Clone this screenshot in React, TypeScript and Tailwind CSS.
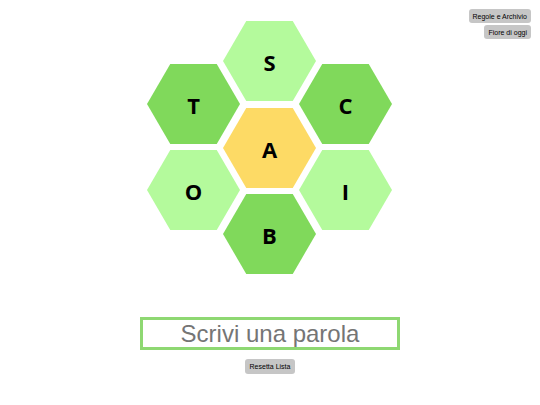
import React, { useState } from 'react';

type Cell = { letter: string; left: number; top: number; color: string };

const LIGHT = 'bg-[#b4fa9c]';
const DARK = 'bg-[#80d95b]';
const CENTER = 'bg-[#fdda65]';

const cells: Cell[] = [
  { letter: 'S', left: 76, top: 0, color: LIGHT },
  { letter: 'T', left: 0, top: 43, color: DARK },
  { letter: 'C', left: 152, top: 43, color: DARK },
  { letter: 'A', left: 76, top: 87, color: CENTER },
  { letter: 'O', left: 0, top: 129, color: LIGHT },
  { letter: 'I', left: 152, top: 129, color: LIGHT },
  { letter: 'B', left: 76, top: 173, color: DARK },
];

const Hex: React.FC<{ cell: Cell; onClick: () => void }> = ({ cell, onClick }) => (
  <button
    onClick={onClick}
    className={`absolute w-[93px] h-[80px] flex items-center justify-center text-[22px] font-bold text-black [clip-path:polygon(25%_0,75%_0,100%_50%,75%_100%,25%_100%,0_50%)] ${cell.color}`}
    style={{ left: cell.left, top: cell.top, fontFamily: '"Open Sans", sans-serif' }}
  >
    <span className="mt-[3px]">{cell.letter}</span>
  </button>
);

export default function App() {
  const [word, setWord] = useState('');

  return (
    <div className="relative w-full min-h-[405px] bg-white" style={{ fontFamily: '"Liberation Sans", Arial, sans-serif' }}>
      {/* Top right buttons */}
      <div className="absolute top-[9px] right-[9px] flex flex-col items-end gap-[2px]">
        <button className="h-[14px] px-[4px] rounded-[3px] bg-[#c6c6c6] text-[7px] leading-none text-black">
          Regole e Archivio
        </button>
        <button className="h-[14px] px-[4px] rounded-[3px] bg-[#c6c6c6] text-[7px] leading-none text-black">
          Fiore di oggi
        </button>
      </div>

      <div className="flex flex-col items-center pt-[21px]">
        {/* Flower */}
        <div className="relative w-[245px] h-[253px] ml-[-1px]">
          {cells.map(c => (
            <Hex key={c.letter} cell={c} onClick={() => setWord(w => w + c.letter)} />
          ))}
        </div>

        <input
          type="text"
          value={word}
          onChange={e => setWord(e.target.value)}
          placeholder="Scrivi una parola"
          className="mt-[43px] w-[260px] h-[33px] border-[3px] border-[#8ed872] text-center text-[24px] text-[#6d6d6d] placeholder:text-[#757575] outline-none"
        />

        <button
          onClick={() => setWord('')}
          className="mt-[9px] w-[50px] h-[15px] rounded-[3px] bg-[#c6c6c6] text-[7px] leading-none text-black"
        >
          Resetta Lista
        </button>
      </div>
    </div>
  );
}
